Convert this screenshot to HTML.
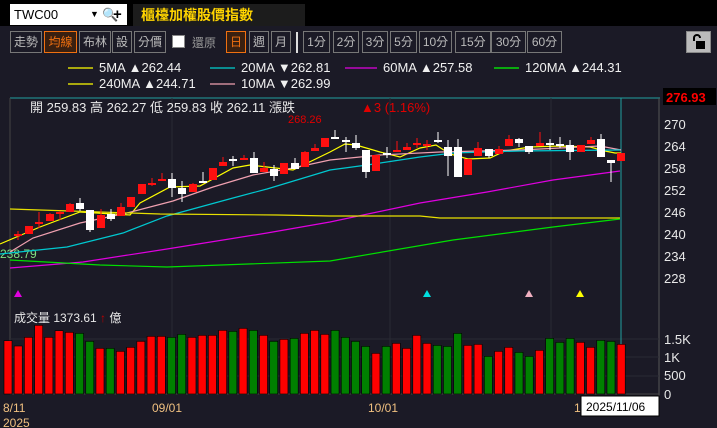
<!DOCTYPE html>
<html><head><meta charset="utf-8"><style>
*{margin:0;padding:0;box-sizing:border-box}
body{width:717px;height:428px;overflow:hidden;background:#1b1a26;font-family:"Liberation Sans","Noto Sans CJK TC",sans-serif;position:relative}
.top{position:absolute;left:0;top:0;width:717px;height:26px;background:#000}
.inp{position:absolute;left:10px;top:4px;width:117px;height:21px;background:#fff;font-size:13px;line-height:21px;padding-left:4px;color:#000}
.title{position:absolute;left:133px;top:4px;width:172px;height:22px;background:#1c1c1c;color:#ffd400;font-size:14px;font-weight:bold;line-height:22px;padding-left:8px}
.btn{position:absolute;top:31px;height:22px;border:1px solid #777;color:#bbb;font-size:12px;line-height:20px;text-align:center}
.on{border-color:#f07010;color:#f07010;background:#3a2010}
.t{position:absolute;color:#e8e8e8;font-size:13px;white-space:nowrap}
</style></head><body>
<div class="top"></div>
<div class="inp">TWC00<span style="position:absolute;left:80px;font-size:9px">▼</span><span style="position:absolute;left:92px;font-size:13px">🔍</span><span style="position:absolute;left:103px;font-weight:bold;font-size:15px">+</span></div>
<div class="title">櫃檯加權股價指數</div>
<div class="btn" style="left:10px;width:32px">走勢</div>
<div class="btn on" style="left:44px;width:33px">均線</div>
<div class="btn" style="left:79px;width:32px">布林</div>
<div class="btn" style="left:112px;width:20px">設</div>
<div class="btn" style="left:134px;width:32px">分價</div>
<div style="position:absolute;left:172px;top:35px;width:13px;height:13px;background:#fff;border:1px solid #888"></div>
<div class="t" style="left:192px;top:34px;color:#999;font-size:12px">還原</div>
<div class="btn on" style="left:226px;width:20px">日</div>
<div class="btn" style="left:249px;width:20px">週</div>
<div class="btn" style="left:271px;width:20px">月</div>
<div style="position:absolute;left:296px;top:32px;width:2px;height:21px;background:#ddd"></div>
<div class="btn" style="left:303px;width:27px">1分</div>
<div class="btn" style="left:333px;width:26px">2分</div>
<div class="btn" style="left:362px;width:26px">3分</div>
<div class="btn" style="left:390px;width:27px">5分</div>
<div class="btn" style="left:419px;width:33px">10分</div>
<div class="btn" style="left:455px;width:36px">15分</div>
<div class="btn" style="left:491px;width:35px">30分</div>
<div class="btn" style="left:527px;width:35px">60分</div>
<div style="position:absolute;left:686px;top:31px;width:25px;height:22px;background:#bbb;border:1px solid #888"><svg width="23" height="20"><path d="M7 9V6a3 3 0 0 1 6 0" stroke="#000" stroke-width="2" fill="none"/><rect x="9" y="9" width="9" height="8" fill="#000"/></svg></div>
<svg width="717" height="428" style="position:absolute;left:0;top:0" id="s" font-family="Liberation Sans, Noto Sans CJK TC, sans-serif">
<g stroke-width="1.2">
<line x1="68" y1="68" x2="93" y2="68" stroke="#ffff00"/><line x1="210" y1="68" x2="235" y2="68" stroke="#00d0d0"/><line x1="345" y1="68" x2="377" y2="68" stroke="#e000e0"/><line x1="494" y1="68" x2="519" y2="68" stroke="#00ff00"/>
<line x1="68" y1="84" x2="93" y2="84" stroke="#ffff00"/><line x1="210" y1="84" x2="235" y2="84" stroke="#f0a0b0"/>
</g>
<g fill="#f0f0f0" font-size="13">
<text x="99" y="72">5MA ▲262.44</text><text x="241" y="72">20MA ▼262.81</text><text x="383" y="72">60MA ▲257.58</text><text x="525" y="72">120MA ▲244.31</text>
<text x="99" y="88">240MA ▲244.71</text><text x="241" y="88">10MA ▼262.99</text>
</g>
<line x1="10" y1="98" x2="660" y2="98" stroke="#20a0a0"/>
<line x1="10" y1="98" x2="10" y2="394" stroke="#444"/>
<line x1="659" y1="98" x2="659" y2="410" stroke="#555"/>
<line x1="172" y1="98" x2="172" y2="394" stroke="#2a2a34"/><line x1="390" y1="98" x2="390" y2="394" stroke="#2a2a34"/><line x1="551" y1="98" x2="551" y2="394" stroke="#2a2a34"/>
<line x1="10" y1="394" x2="659" y2="394" stroke="#444"/>
<line x1="10" y1="339" x2="659" y2="339" stroke="#2a2a34"/><line x1="10" y1="357" x2="659" y2="357" stroke="#2a2a34"/><line x1="10" y1="376" x2="659" y2="376" stroke="#2a2a34"/>
<line x1="621" y1="98" x2="621" y2="394" stroke="#20a0a0"/>
<g fill="#e8e8e8" font-size="13"><text x="30" y="112">開 259.83  高 262.27  低 259.83  收 262.11  漲跌</text></g>
<text x="361" y="112" fill="#e00000" font-size="13">▲3 (1.16%)</text>
<text x="288" y="123" fill="#e00000" font-size="11">268.26</text>
<rect x="663" y="88" width="53" height="17" fill="#000"/><text x="666" y="102" fill="#ff0000" font-size="13" font-weight="bold">276.93</text>
<g fill="#e8e8e8" font-size="13"><text x="664" y="129">270</text><text x="664" y="151">264</text><text x="664" y="173">258</text><text x="664" y="195">252</text><text x="664" y="217">246</text><text x="664" y="239">240</text><text x="664" y="261">234</text><text x="664" y="283">228</text>
<text x="664" y="344">1.5K</text><text x="664" y="362">1K</text><text x="664" y="380">500</text><text x="664" y="399">0</text></g>
<text x="0" y="258" fill="#80e080" font-size="12">238.79</text>
<g id="ma" fill="none" stroke-width="1.2"></g>
<g id="cd"></g><g id="vol"></g>
<polygon points="14,297 22,297 18,290" fill="#e000e0"/><polygon points="423,297 431,297 427,290" fill="#00e0e0"/><polygon points="525,297 533,297 529,290" fill="#f0b0c0"/><polygon points="576,297 584,297 580,290" fill="#ffff00"/>
<text x="14" y="322" fill="#e8e8e8" font-size="12">成交量 1373.61 <tspan fill="#c00000">↑</tspan> 億</text>
<g fill="#f0c080" font-size="12"><text x="3" y="412">8/11</text><text x="152" y="412">09/01</text><text x="368" y="412">10/01</text><text x="3" y="427">2025</text><text x="574" y="412">1</text></g>
<rect x="581" y="396" width="78" height="20" fill="#fff" stroke="#000"/><text x="586" y="411" fill="#000" font-size="12">2025/11/06</text>
</svg>
<script>
const NS="http://www.w3.org/2000/svg";
function el(p,t,a){const e=document.createElementNS(NS,t);for(const k in a)e.setAttribute(k,a[k]);document.getElementById(p).appendChild(e);}
const mas=[["#ffff00","0,244 40,227 80,212 130,215 140,203 170,187 200,186 233,168 250,165 267,167 293,170 330,152 345,144 356,145 380,152 400,157 420,148 436,145 450,154 468,159 490,158 505,151 530,147 560,146 590,147 605,151 615,153 621,153"],
["#f0a0b0","10,252 33,238 80,223 127,213 173,201 213,187 253,175 293,168 330,160 380,155 440,152 520,150 560,148 600,146 621,150"],
["#00c8d0","0,254 67,247 123,233 167,216 233,198 267,189 330,170 367,165 420,157 453,153 520,151 620,150"],
["#e000e0","10,268 83,262 167,249 267,233 330,222 420,203 487,192 553,180 620,171"],
["#e8e000","10,209 100,212 160,214 277,215 330,216 420,216 440,218 620,218"],
["#00e000","10,260 100,265 167,267 330,261 453,240 553,227 620,219"]];
mas.forEach(m=>el("ma","polyline",{points:m[1],stroke:m[0]}));
// x, top, bottom, wickTop, wickBot, red?
const C=[[18,234,236,231,240,1],[29,226,234,226,234,1],[39,222,224,212,228,1],[50,214,221,213,221,1],[60,212,214,211,220,1],[70,204,212,203,212,1],[80,203,209,198,211,0],[90,210,230,210,232,0],[101,215,228,209,228,1],[111,214,219,209,221,0],[121,207,216,203,216,1],[131,197,207,197,207,1],[142,184,194,184,194,1],[152,183,185,178,186,1],[162,179,181,173,181,1],[172,179,188,173,197,0],[182,188,194,181,202,0],[193,184,192,183,192,1],[203,181,183,172,183,0],[213,168,180,168,180,1],[223,162,166,157,166,1],[233,159,161,156,166,0],[244,158,160,155,160,1],[254,158,173,152,173,0],[264,168,172,162,172,1],[274,169,176,165,181,0],[284,163,174,163,174,1],[295,163,169,158,169,0],[305,152,167,151,167,1],[315,148,151,144,151,1],[325,138,147,138,147,1],[335,137,139,130,139,0],[346,140,142,137,152,0],[356,143,148,135,150,0],[366,150,172,150,178,0],[376,155,171,155,171,1],[387,153,155,147,158,0],[397,150,152,141,152,1],[407,147,150,143,150,1],[417,143,145,138,148,1],[427,144,146,140,150,1],[438,140,142,132,143,0],[448,147,156,140,176,0],[458,147,177,139,177,0],[468,159,175,159,175,1],[478,148,156,142,156,1],[489,149,156,149,158,0],[499,149,154,146,154,1],[509,139,146,135,146,1],[519,139,143,138,147,0],[529,146,152,146,154,0],[540,143,146,132,146,1],[550,143,145,139,150,0],[560,144,146,137,148,0],[570,145,152,140,160,0],[581,145,152,145,152,1],[591,140,144,137,144,1],[601,139,157,134,157,0],[611,160,163,160,182,0],[621,153,161,153,161,1]];
C.forEach(c=>{const col=c[5]?"#ff1010":"#ffffff";el("cd","line",{x1:c[0],x2:c[0],y1:c[3],y2:c[4],stroke:col});el("cd","rect",{x:c[0]-4,y:c[1],width:8,height:Math.max(1,c[2]-c[1]),fill:col});});
const V=[[122,1],[138,1],[112,1],[76,1],[112,1],[92,1],[97,1],[100,0],[124,0],[145,1],[145,0],[154,1],[142,1],[124,1],[109,1],[109,1],[112,0],[103,0],[112,1],[106,1],[106,1],[91,1],[94,0],[85,1],[91,0],[106,1],[124,0],[118,1],[115,0],[100,1],[91,1],[103,1],[91,0],[112,0],[124,0],[139,0],[160,1],[139,0],[130,1],[145,1],[106,1],[130,1],[136,0],[139,0],[100,0],[136,1],[133,1],[169,0],[154,1],[142,1],[157,0],[169,0],[151,1],[115,0],[127,0],[115,0],[127,1],[142,1],[121,0],[124,0],[133,1]];
V.forEach((v,i)=>{const x=8+i*10.22;const y=300+v[0]/3;el("vol","rect",{x:x-4,y:y,width:8,height:394-y,fill:v[1]?"#ff0000":"#008000",stroke:"#000","stroke-width":0.6});});
</script>
</body></html>
